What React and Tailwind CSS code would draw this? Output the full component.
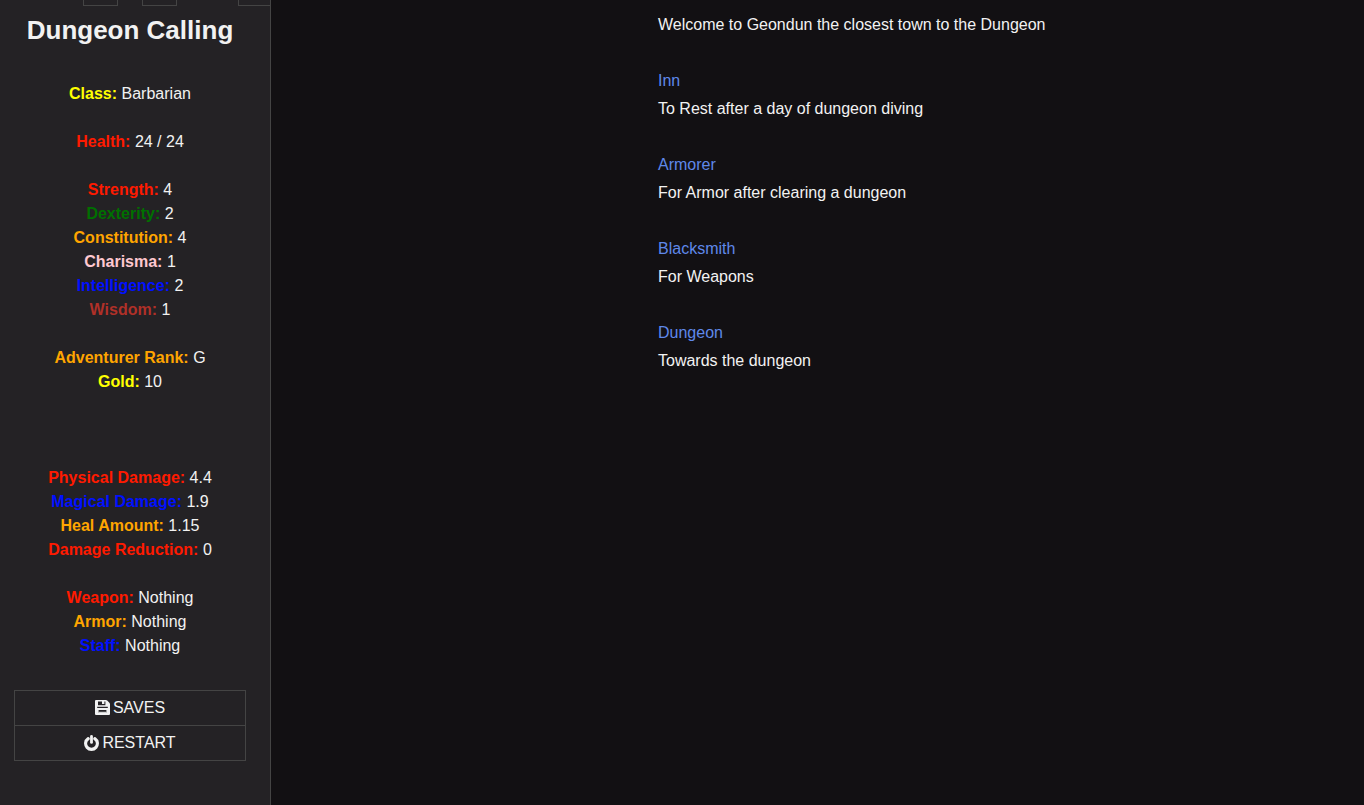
import React from 'react';

const statGroups = [
  {
    spacing: '',
    stats: [{ label: 'Class', value: 'Barbarian', color: 'text-[#ffff00]' }],
  },
  {
    spacing: 'mt-6',
    stats: [{ label: 'Health', value: '24 / 24', color: 'text-[#ff1a00]' }],
  },
  {
    spacing: 'mt-6',
    stats: [
      { label: 'Strength', value: '4', color: 'text-[#ff1a00]' },
      { label: 'Dexterity', value: '2', color: 'text-[#007000]' },
      { label: 'Constitution', value: '4', color: 'text-[#ffa500]' },
      { label: 'Charisma', value: '1', color: 'text-[#ffc8d0]' },
      { label: 'Intelligence', value: '2', color: 'text-[#0010ff]' },
      { label: 'Wisdom', value: '1', color: 'text-[#b03028]' },
    ],
  },
  {
    spacing: 'mt-6',
    stats: [
      { label: 'Adventurer Rank', value: 'G', color: 'text-[#ffa500]' },
      { label: 'Gold', value: '10', color: 'text-[#ffff00]' },
    ],
  },
  {
    spacing: 'mt-18',
    stats: [
      { label: 'Physical Damage', value: '4.4', color: 'text-[#ff1a00]' },
      { label: 'Magical Damage', value: '1.9', color: 'text-[#0010ff]' },
      { label: 'Heal Amount', value: '1.15', color: 'text-[#ffa500]' },
      { label: 'Damage Reduction', value: '0', color: 'text-[#ff1a00]' },
    ],
  },
  {
    spacing: 'mt-6',
    stats: [
      { label: 'Weapon', value: 'Nothing', color: 'text-[#ff1a00]' },
      { label: 'Armor', value: 'Nothing', color: 'text-[#ffa500]' },
      { label: 'Staff', value: 'Nothing', color: 'text-[#0010ff]' },
    ],
  },
];

const places = [
  { name: 'Inn', description: 'To Rest after a day of dungeon diving' },
  { name: 'Armorer', description: 'For Armor after clearing a dungeon' },
  { name: 'Blacksmith', description: 'For Weapons' },
  { name: 'Dungeon', description: 'Towards the dungeon' },
];

const SaveIcon = () => (
  <svg viewBox="0 0 15 15" className="w-[15px] h-[15px]" fill="currentColor" aria-hidden="true">
    <path fillRule="evenodd" d="M1 0H10.8Q11.6 0 12.2 .6L14.4 2.8Q15 3.4 15 4.2V14Q15 15 14 15H1Q0 15 0 14V1Q0 0 1 0ZM3 1.6V5.2H10.4V1.6H9.4V4H7V1.6ZM2.2 6.8V8H12.8V6.8ZM3.6 10V12.8H11.4V10Z" />
    <path d="M3.6 11.8H11.4V12.8H3.6z" />
  </svg>
);

const PowerIcon = () => (
  <svg viewBox="0 0 15 16" className="w-[15px] h-4" fill="none" stroke="currentColor" strokeLinecap="round" aria-hidden="true">
    <path d="M4.2 3.6A5.9 5.9 0 1 0 10.8 3.6" strokeWidth="3.1" />
    <path d="M7.5 1.4V7.4" strokeWidth="2.8" />
  </svg>
);

const Sidebar = () => (
  <aside className="w-[271px] shrink-0 bg-[#242225] border-r border-[#444444] pb-6">
    {/* History controls */}
    <div className="flex h-[6px]">
      <button aria-label="Back" className="ml-[83px] w-[35px] border border-t-0 border-[#444444]" />
      <button aria-label="Forward" className="ml-6 w-[35px] border border-t-0 border-[#444444]" />
      <button aria-label="Toggle sidebar" className="ml-auto w-8 border border-t-0 border-r-0 border-[#444444]" />
    </div>

    <div className="pl-[14px] pr-6 text-center">
      <h1 className="pt-2 text-[26px] leading-8 font-bold">Dungeon Calling</h1>

      {/* Character stats */}
      <div className="mt-9">
        {statGroups.map((group, index) => (
          <div key={index} className={group.spacing}>
            {group.stats.map((stat) => (
              <p key={stat.label}>
                <b className={stat.color}>{stat.label}:</b> {stat.value}
              </p>
            ))}
          </div>
        ))}
      </div>

      {/* Menu */}
      <div className="mt-8 border border-[#444444]">
        <button className="flex w-full h-[34px] items-center justify-center gap-[3px] pb-px">
          <SaveIcon />
          SAVES
        </button>
        <div className="h-px bg-[#444444]" />
        <button className="flex w-full h-[34px] items-center justify-center gap-[3px] pb-px">
          <PowerIcon />
          RESTART
        </button>
      </div>
    </div>
  </aside>
);

const Passage = () => (
  <main className="flex-1 pl-[387px] pr-6 pt-[11px] leading-7">
    <p>Welcome to Geondun the closest town to the Dungeon</p>
    {places.map((place) => (
      <section key={place.name} className="mt-7">
        <a href="#" className="text-[#5f88ea] hover:underline">
          {place.name}
        </a>
        <p>{place.description}</p>
      </section>
    ))}
  </main>
);

const App = () => {
  return (
    <div className="flex min-h-screen bg-[#121013] text-[#f2f2f2] text-base font-['Liberation_Sans',Arial,sans-serif]">
      <Sidebar />
      <Passage />
    </div>
  );
};

export default App;
